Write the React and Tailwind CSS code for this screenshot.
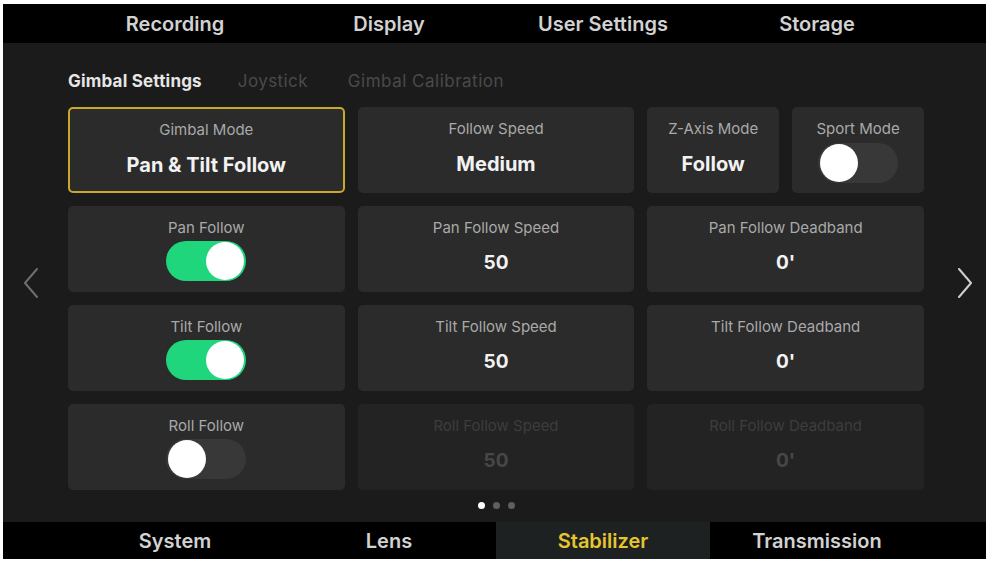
import React from "react";

const topTabs = ["Recording", "Display", "User Settings", "Storage"];
const bottomTabs = ["System", "Lens", "Stabilizer", "Transmission"];

const Toggle = ({ on, className = "" }) => (
  <div
    className={`flex h-[40px] w-[80px] items-center rounded-full px-[2px] ${
      on ? "justify-end bg-[#1fd67c]" : "justify-start bg-[#383838]"
    } ${className}`}
  >
    <div className="h-[38px] w-[38px] rounded-full bg-white" />
  </div>
);

const Card = ({ label, value, small, toggle, disabled, active, className = "" }) => (
  <div
    className={`flex flex-col items-center rounded-[5px] ${
      disabled ? "bg-[#232323]" : "bg-[#2b2b2b]"
    } ${active ? "border-2 border-[#c9a92c] pt-[12px]" : "pt-[13px]"} ${className}`}
  >
    <div
      className={`text-[15px] leading-[18px] ${
        disabled ? "text-[#3d3d3d]" : "text-[#a9a9a9]"
      }`}
    >
      {label}
    </div>
    {toggle !== undefined ? (
      <Toggle on={toggle} className="mt-[4px]" />
    ) : (
      <div
        className={`mt-[14px] font-bold leading-[24px] ${
          small ? "text-[19px]" : "text-[20px]"
        } ${disabled ? "text-[#474747]" : "text-[#f2f2f2]"}`}
      >
        {value}
      </div>
    )}
  </div>
);

const Chevron = ({ dir, color }) => (
  <svg width="16" height="30" viewBox="0 0 16 30" fill="none">
    <path
      d={dir === "left" ? "M14 1 L2 15 L14 29" : "M2 1 L14 15 L2 29"}
      stroke={color}
      strokeWidth="2"
      strokeLinecap="round"
      strokeLinejoin="round"
    />
  </svg>
);

export default function App() {
  return (
    <div className="h-[562px] w-[990px] bg-white pb-[3px] pl-[3px] pr-[4px] pt-[4px]" style={{ fontFamily: "Inter, 'Liberation Sans', sans-serif" }}>
      <div className="flex h-full w-full flex-col bg-[#1b1b1b]">
        <div className="grid h-[39px] grid-cols-4 bg-black pl-[65px] pr-[62px]">
          {topTabs.map((t) => (
            <div key={t} className="flex items-center justify-center text-[20px] font-semibold text-[#d2d2d2]">
              {t}
            </div>
          ))}
        </div>

        <div className="flex flex-1">
          <div className="flex w-[65px] items-center pl-[20px]">
            <Chevron dir="left" color="#6e6e6e" />
          </div>

          <div className="flex flex-1 flex-col pt-[28px]">
            <div className="flex h-[22px] items-center text-[17px]">
              <span className="font-bold tracking-[0.2px] text-[#e6e6e6]">Gimbal Settings</span>
              <span className="ml-[36px] tracking-[0.4px] text-[#4a4a4a]">Joystick</span>
              <span className="ml-[40px] tracking-[0.5px] text-[#4a4a4a]">Gimbal Calibration</span>
            </div>

            <div className="mt-[14px] grid grid-cols-3 gap-[13px]">
              <Card label="Gimbal Mode" value="Pan & Tilt Follow" active className="h-[86px]" />
              <Card label="Follow Speed" value="Medium" className="h-[86px]" />
              <div className="flex h-[86px] gap-[13px]">
                <Card label="Z-Axis Mode" value="Follow" className="flex-1" />
                <div className="flex flex-1 flex-col items-center rounded-[5px] bg-[#2b2b2b] pt-[13px]">
                  <div className="text-[15px] leading-[18px] text-[#a9a9a9]">Sport Mode</div>
                  <Toggle on={false} className="mt-[5px] w-[78px]" />
                </div>
              </div>

              <Card label="Pan Follow" toggle={true} className="h-[86px]" />
              <Card label="Pan Follow Speed" value="50" small className="h-[86px]" />
              <Card label="Pan Follow Deadband" value="0'" small className="h-[86px]" />

              <Card label="Tilt Follow" toggle={true} className="h-[86px]" />
              <Card label="Tilt Follow Speed" value="50" small className="h-[86px]" />
              <Card label="Tilt Follow Deadband" value="0'" small className="h-[86px]" />

              <Card label="Roll Follow" toggle={false} className="h-[86px]" />
              <Card label="Roll Follow Speed" value="50" small disabled className="h-[86px]" />
              <Card label="Roll Follow Deadband" value="0'" small disabled className="h-[86px]" />
            </div>

            <div className="mt-[12px] flex justify-center gap-[8px]">
              <div className="h-[7px] w-[7px] rounded-full bg-white" />
              <div className="h-[7px] w-[7px] rounded-full bg-[#5f5f5f]" />
              <div className="h-[7px] w-[7px] rounded-full bg-[#5f5f5f]" />
            </div>
          </div>

          <div className="flex w-[62px] items-center pl-[33px]">
            <Chevron dir="right" color="#cfcfcf" />
          </div>
        </div>

        <div className="grid h-[37px] grid-cols-4 bg-black pl-[65px] pr-[62px]">
          {bottomTabs.map((t) => (
            <div
              key={t}
              className={`flex items-center justify-center text-[20px] font-semibold ${
                t === "Stabilizer" ? "bg-[#1e2121] text-[#e6c62e]" : "text-[#d2d2d2]"
              }`}
            >
              {t}
            </div>
          ))}
        </div>
      </div>
    </div>
  );
}
